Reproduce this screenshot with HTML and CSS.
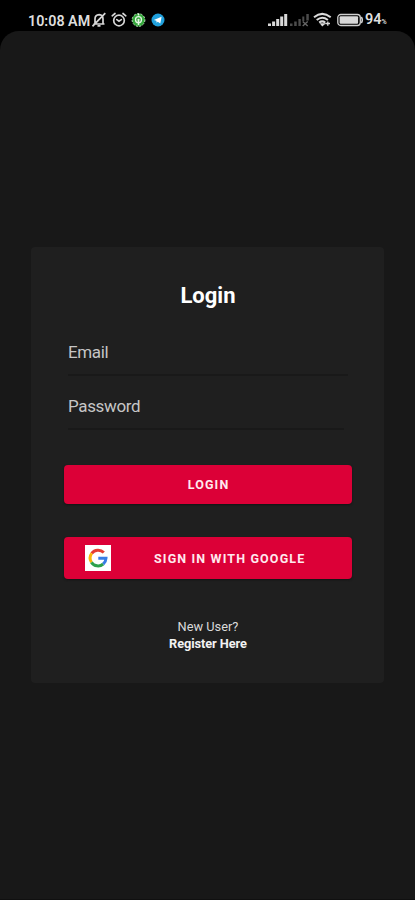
FILE: index.html
```html
<!DOCTYPE html>
<html lang="en">
<head>
<meta charset="utf-8">
<title>Login</title>
<link rel="stylesheet" href="styles.css">
</head>
<body>
<header class="status">
  <span class="time">10:08 AM</span>
  <svg class="icon bell" width="14" height="16" viewBox="0 0 14 16" fill="none" stroke="#d6d6d6" stroke-width="1.7">
    <path d="M3 11.500V7q0-4 4.200-4.300Q11 3 11 7v4.500M1.500 12h11M5.500 13.800h3M13.300 1.200 .5 14.300"/>
  </svg>
  <svg class="icon alarm" width="16" height="16" viewBox="0 0 16 16" fill="none" stroke="#d6d6d6" stroke-width="1.700" stroke-linecap="round">
    <circle cx="8" cy="8.500" r="5.300"/><path d="M1.200 3.800 4 1.500M14.800 3.800 12 1.500M5.800 7.600 8 9.200l2.300-1.600"/>
  </svg>
  <svg class="icon pulse" width="15" height="16" viewBox="0 0 15 16" fill="none">
    <circle cx="7.500" cy="8" r="6.400" fill="#35a83b" stroke="#b9e2ba" stroke-width="1" stroke-dasharray="2 1.500"/>
    <circle cx="7.500" cy="7.700" r="3" stroke="#e5f6e5" stroke-width="1.300"/><path d="M7.500 1.500v2M7.500 7.500v5.500" stroke="#e5f6e5" stroke-width="1.500"/><circle cx="7.500" cy="7.700" r="1" fill="#e5f6e5"/>
  </svg>
  <svg class="icon plane" width="14" height="16" viewBox="0 0 14 16">
    <circle cx="7" cy="8" r="6.500" fill="#20a0dc"/><path d="M2.800 7.900 10.600 4.800 9.300 11.500 6.800 9.700 5.600 10.800 5.400 8.800z" fill="#fff"/>
  </svg>
  <span class="spacer"></span>
  <svg class="icon signal" width="20" height="14" viewBox="0 0 20 14" fill="#d9d9d9">
    <path d="M0 10.500h3V13H0zM4.100 8.500h3V13H4.100zM8.200 6h3v7H8.200zM12.200 3.500h3v9.500h-3zM16.200 1H19.200v12h-3z"/>
  </svg>
  <svg class="icon nosignal" width="20" height="14" viewBox="0 0 20 14" fill="#4c4c4c">
    <path d="M0 10.500h2.500V13H0zM4.200 8.500h2.500V13H4.200zM8.400 6h2.400v7H8.400zM12.300 3.500h2v4.500h-2zM16.300 1h2.500v6.500h-2.500z"/>
    <path d="m12.700 8.500 5 4.500m0-4.500-5 4.500" stroke="#666" stroke-width="1.400"/>
  </svg>
  <svg class="icon wifi" width="19" height="15" viewBox="0 0 19 15" fill="none" stroke="#dadada" stroke-width="2">
    <path d="M1 5.300Q9.200-1.500 17.700 5.300M3.700 8Q9.200 3.500 14.900 8M6.200 10.600q3-2.400 6 0"/><path d="M8 11.800h3.300L9.300 13.500zM12.500 11.500h4.500M14.800 9.500v4.300" stroke-width="1.300"/>
  </svg>
  <svg class="icon battery" width="27" height="14" viewBox="0 0 27 14" fill="none">
    <rect x=".8" y="1.500" width="22.500" height="11" rx="3" stroke="#cfcfcf" stroke-width="1.300"/>
    <rect x="2.600" y="3.300" width="18.500" height="7.400" rx="1" fill="#d8d8d8"/><path d="M24.300 4q2 3 0 6" stroke="#cfcfcf" stroke-width="1.600"/>
  </svg>
  <span class="charge">94<small>%</small></span>
</header>
<main class="screen">
  <form class="card">
    <h1>Login</h1>
    <div class="field"><span class="email">Email</span></div>
    <div class="field second"><span class="password">Password</span></div>
    <button type="button" class="btn login"><span>LOGIN</span></button>
    <button type="button" class="btn google">
      <svg class="logo" width="26" height="26" viewBox="0 0 26 26" fill="none" stroke-width="3">
        <path d="M0 0h26v26H0z" fill="#fff"/>
        <path d="M6.700 8.400A8 8 0 0 1 18.800 7.500" stroke="#e63e32"/>
        <path d="M6.700 8.400A8 8 0 0 0 6.400 17.300" stroke="#fbb50b"/>
        <path d="M6.400 17.300A8 8 0 0 0 18.200 19" stroke="#2ea14d"/>
        <path d="M18.200 19A8 8 0 0 0 21 13.200H13.300" stroke="#397de5"/>
      </svg>
      <span class="label">SIGN IN WITH GOOGLE</span>
    </button>
    <p class="new"><span>New User?</span></p>
    <p class="register"><span>Register Here</span></p>
  </form>
</main>
</body>
</html>
```
FILE: styles.css
```css
* { box-sizing: border-box; }
body {
  margin: 0;
  height: 900px;
  overflow: hidden;
  background: #000;
  color: #fff;
  font-family: Roboto, "Liberation Sans", sans-serif;
  display: flex;
  flex-direction: column;
}
.status {
  height: 31px;
  flex: none;
  padding: 8px 27px 0 28px;
  display: flex;
  align-items: center;
  color: #dedede;
}
.icon { flex: none; display: block; }
.time { font-size: 14.3px; font-weight: 600; line-height: 20px; padding-top: 2px; width: 64px; white-space: nowrap; }
.alarm { margin-left: 5px; }
.pulse { margin-left: 4px; }
.plane { margin-left: 5px; }
.spacer { flex: 1; }
.signal { margin-right: -1px; }
.nosignal { margin-left: 3px; }
.wifi { margin-left: 3px; }
.battery { margin-left: 5px; }
.charge { font-size: 14.5px; font-weight: 600; line-height: 20px; padding-top: 2px; margin-left: 1px; width: 23px; white-space: nowrap; }
.charge small { font-size: 7px; }
.screen {
  flex: 1;
  background: #181818;
  border-radius: 19px 19px 0 0;
  border-bottom: 1px solid #101010;
  padding: 216px 31px 0;
}
.card {
  height: 436px;
  width: 353px;
  background: #1f1f1f;
  border-radius: 4px;
  padding: 35px 32px 0 33px;
}
h1 { margin: 0; font-size: 22px; line-height: 28px; font-weight: 700; text-align: center; }
.field {
  height: 53px;
  margin: 13px 4px 0;
  padding: 18px 0 0;
  border-bottom: 2px solid #191919;
  font-size: 17px;
  line-height: 22px;
  letter-spacing: -0.35px;
  color: #c6c6c6;
}
.field.second { margin-top: 1px; margin-right: 8px; }
.btn {
  display: flex;
  align-items: center;
  justify-content: center;
  width: 288px;
  padding: 0;
  border: 0;
  border-radius: 4px;
  background: #dc0037;
  color: #ffe9ee;
  font: 700 12.5px/16px Roboto, "Liberation Sans", sans-serif;
  letter-spacing: 1.15px;
  box-shadow: 0 1px 2px #141414;
}
.login { height: 39px; margin-top: 35px; padding: 1px 0 0 1px; }
.google { height: 42px; margin-top: 33px; justify-content: flex-start; padding-left: 21px; }
.label { margin-left: 43px; padding-top: 2px; white-space: nowrap; }
p { margin: 0; text-align: center; font-size: 12.8px; line-height: 17px; }
.new { margin-top: 39px; color: #dadada; }
.register { font-weight: 700; color: #f2f2f2; letter-spacing: -0.08px; }
```
